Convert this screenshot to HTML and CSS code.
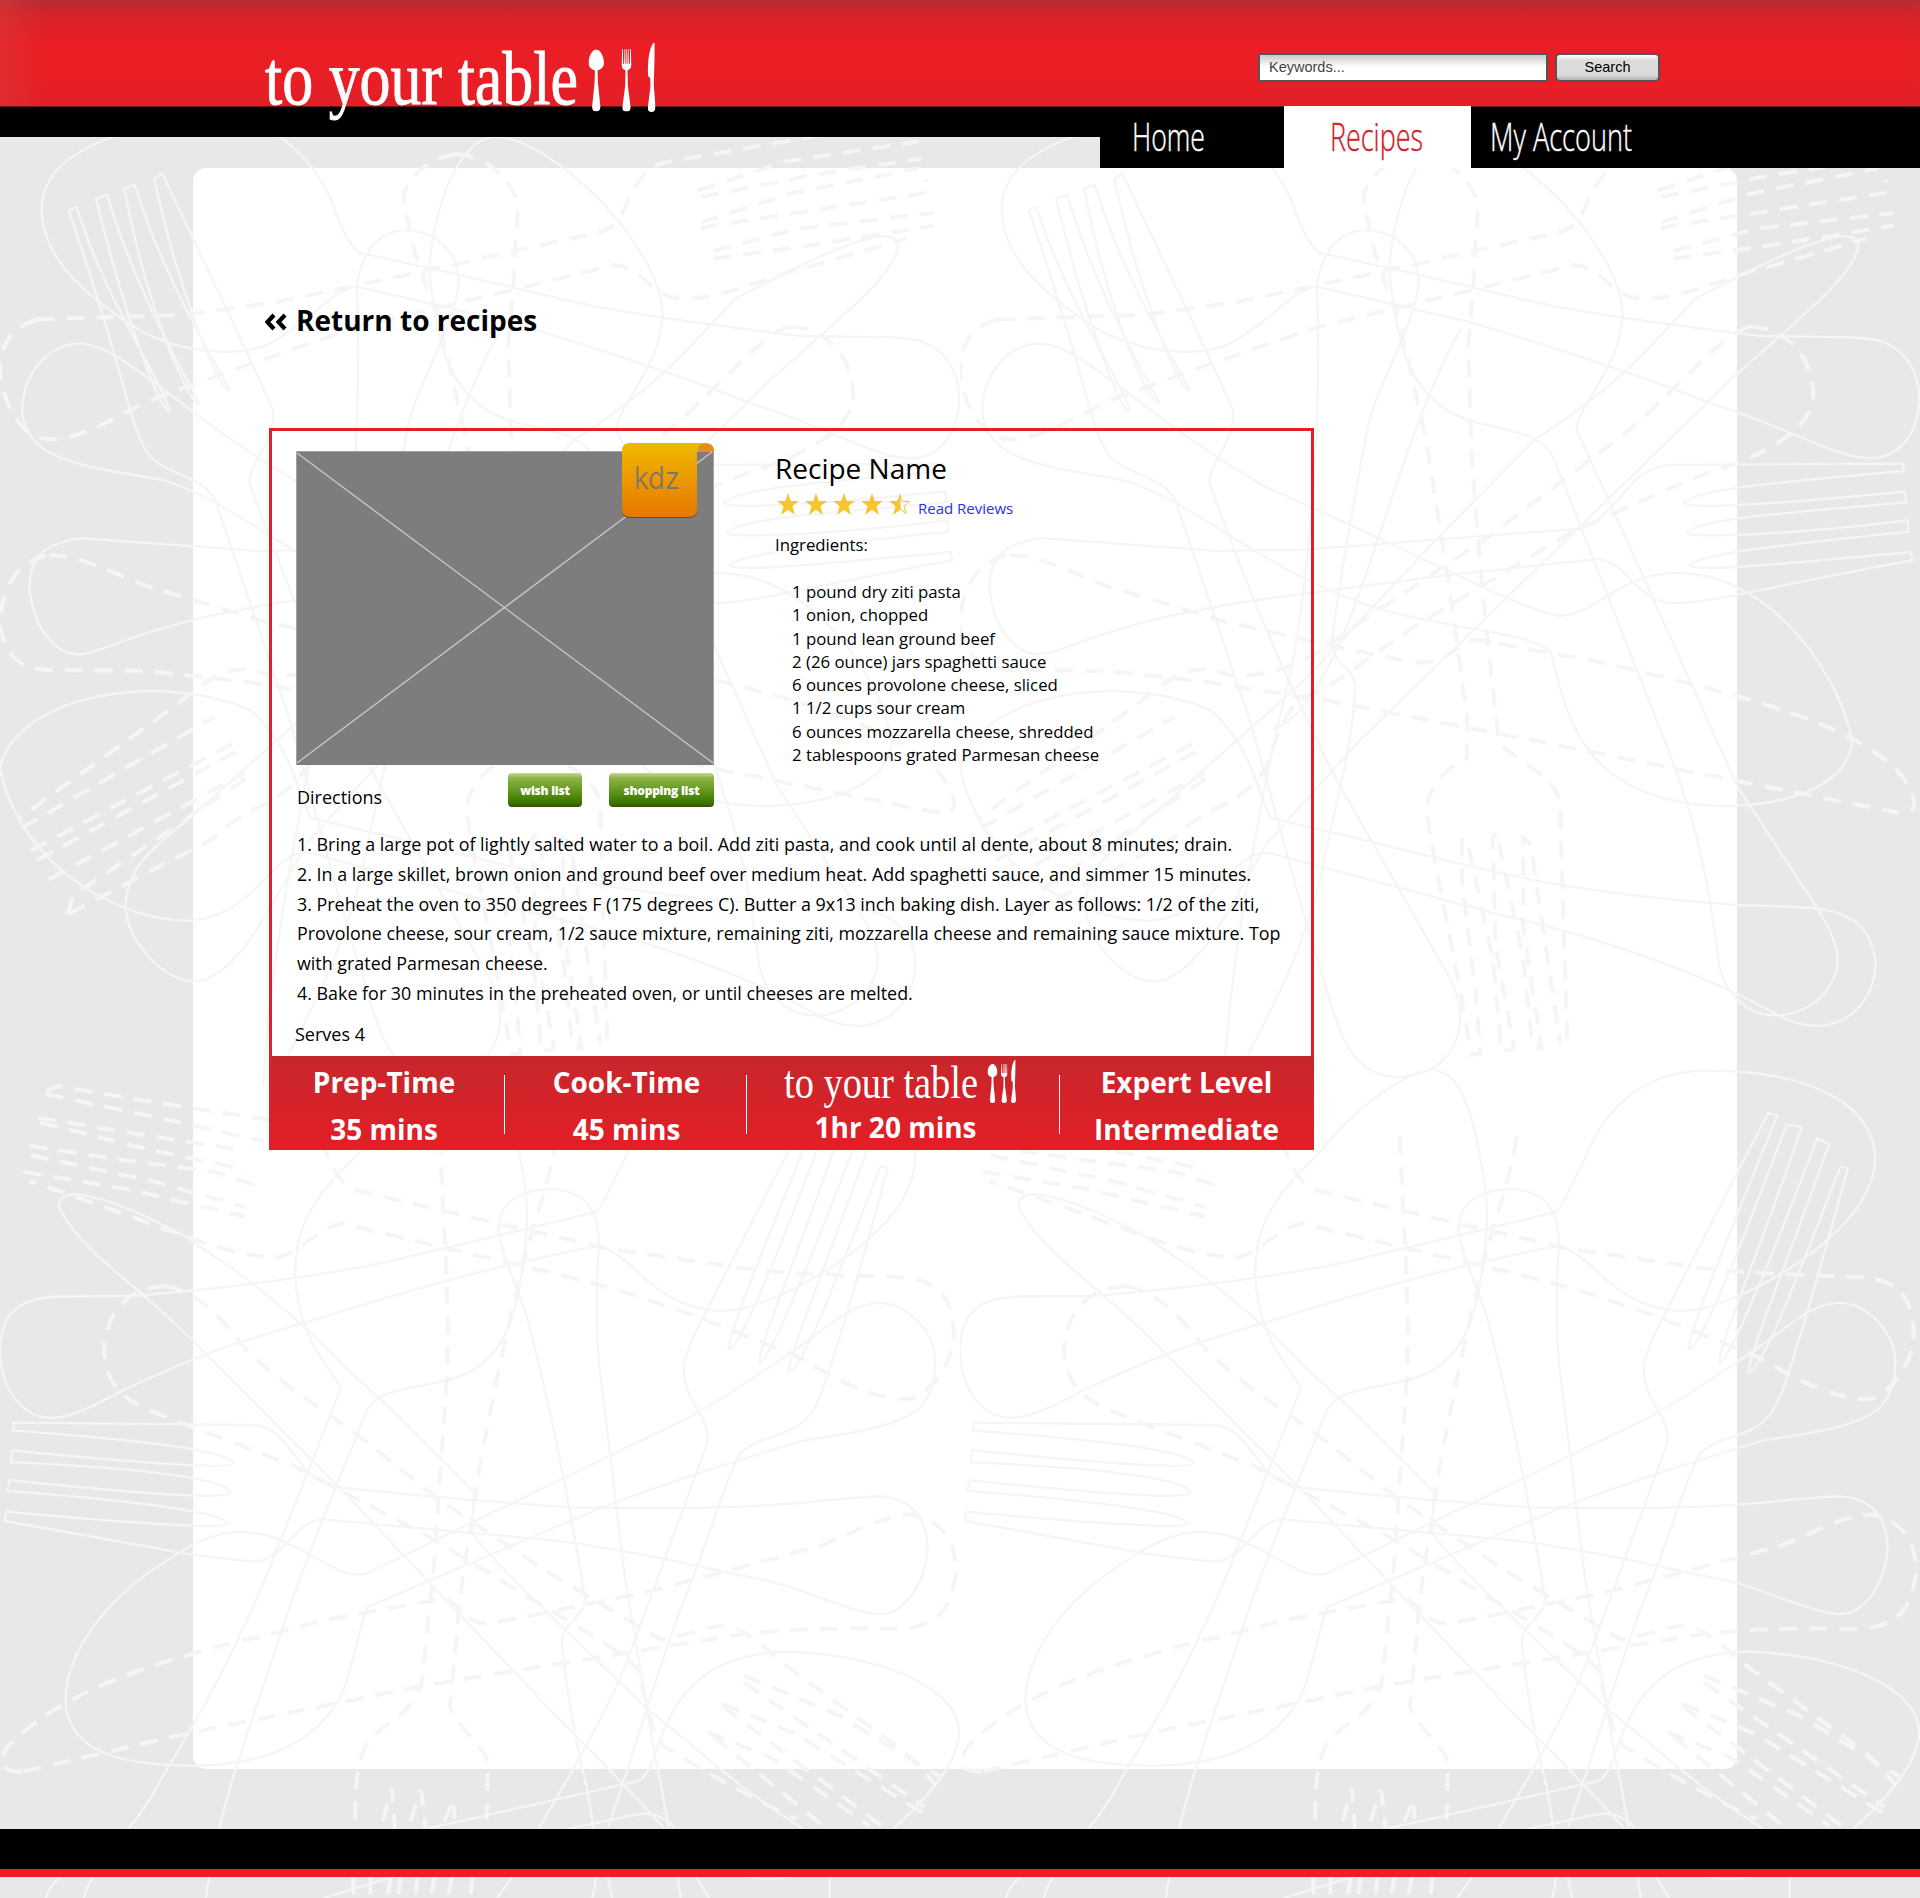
FILE: index.html
```html
<!DOCTYPE html>
<html lang="en">
<head>
<meta charset="utf-8">
<title>to your table - Recipe</title>
<link rel="stylesheet" href="styles.css">
</head>
<body>
<svg class="defs" width="0" height="0" aria-hidden="true">
  <symbol id="spoon" viewBox="0 0 46 187" preserveAspectRatio="none"><path d="M23 0C10 0 0 23 0 40C0 52 8 60 19 63L18 100L11 170C10 182 14 187 23 187S36 182 35 170L28 100L27 63C38 60 46 52 46 40C46 23 36 0 23 0Z"/></symbol>
  <symbol id="fork" viewBox="0 0 30 187" preserveAspectRatio="none"><path d="M2 0H4L5 44H8L9 0H11L12 44H14V0H16V44H18L19 0H21L22 44H25L26 0H28L30 48C29 57 25 61 18 64L19 110L27 172C28 183 24 187 15 187S2 183 3 172L11 110L12 64C5 61 1 57 0 48Z"/></symbol>
  <symbol id="knife" viewBox="0 0 24 207" preserveAspectRatio="none"><path d="M17 0H21C22 50 19 105 19 130L24 190C24 203 20 207 12 207S0 203 1 193L9 130L8 105L2 100C-1 70 3 20 17 0Z"/></symbol>
  <symbol id="star" viewBox="0 0 22 22"><path d="M11 0L13.800 8H22L15.400 13.200L18 22L11 16.800L4 22L6.600 13.200L0 8H8.200Z"/></symbol>
</svg>

<svg class="doodles" width="1920" height="1898" aria-hidden="true">
  <defs>
    <pattern id="cutlery" width="960" height="1898" patternUnits="userSpaceOnUse">
      <g transform="translate(0 130) scale(.61224 .63776)">
        <g class="line">
          <path d="M450 5C500 40 530 80 545 120S575 190 592 194C700 215 850 250 940 270S1250 317 1310 323C1400 325 1460 322 1500 330C1550 345 1567 385 1567 425C1565 470 1540 512 1490 515C1430 515 1350 465 1230 430C1100 380 950 335 836 302L585 246C540 250 520 290 450 330C400 360 300 350 230 315C120 250 68 190 68 122C70 70 110 35 200 5"/>
          <path d="M112 125L125 121C170 260 250 370 278 440C265 455 200 280 157 108L175 101C220 250 300 380 325 428C310 435 240 280 203 92L220 86C270 240 350 360 375 408C360 415 290 250 252 76L265 68C320 180 430 400 446 440C450 490 405 520 408 555C440 640 500 800 610 1010L800 1330C840 1400 810 1485 710 1485C620 1475 620 1400 570 1260L475 930L355 590C340 540 270 545 240 505C210 460 210 400 112 125"/>
          <path d="M805 10C740 20 700 150 702 230C715 350 740 430 840 458C920 475 950 480 970 515L1160 980C1220 1130 1230 1240 1240 1310C1260 1390 1340 1410 1400 1365C1450 1320 1440 1280 1400 1220L1270 1030L1130 730L1007 470C1010 430 1080 370 1082 290C1080 180 900 10 805 10"/>
          <path d="M790 630L940 485C1060 410 1110 360 1200 265C1300 215 1460 135 1467 180C1465 230 1350 310 1250 400L650 960L500 1120C450 1200 390 1335 315 1335C260 1330 210 1270 205 1220C205 1150 260 1120 320 1070L560 865L790 630"/>
          <path d="M512 1080C490 1070 490 980 410 910C270 850 30 880 0 1000C30 1150 190 1240 310 1240C430 1230 440 1120 512 1135L880 1230C1070 1270 1250 1340 1330 1385C1430 1440 1500 1370 1495 1300C1480 1210 1400 1220 1270 1215C900 1190 800 1140 512 1080"/>
          <path d="M132 640C60 650 48 680 48 720C55 780 90 825 132 822C190 815 220 775 500 735L780 700L1040 673C1090 675 1100 735 1160 742C1230 742 1300 720 1555 675L1553 662C1400 675 1200 695 1192 683C1200 665 1350 650 1549 630L1548 612C1350 635 1200 640 1187 632C1200 610 1350 600 1546 584L1543 567C1350 585 1190 595 1182 585C1200 565 1300 555 1541 535L1540 523L1160 525C1090 530 1080 600 1015 625L560 658L420 660Z"/>
          <path d="M130 335C80 335 38 380 36 440C40 530 180 530 270 550C400 590 500 700 700 755C850 790 940 790 965 820C990 900 1000 1050 1240 1060C1370 1060 1450 1020 1457 960C1440 860 1330 700 1180 695C1080 690 1040 760 980 762C920 755 740 660 500 560C300 450 200 335 130 335"/>
          <path d="M430 1500C440 1300 500 1000 540 850C580 650 590 400 583 245C590 190 620 157 665 157C720 160 755 200 748 250C740 310 680 400 665 470C630 650 615 740 608 800C605 840 650 840 645 880C640 980 610 1060 590 1170C560 1280 530 1340 460 1470"/>
          <path d="M820 310C700 500 640 900 510 940"/>
        </g>
        <g class="dash">
          <path d="M745 38C690 45 650 90 660 120L680 200L720 310L760 480L800 720L828 920L828 985C790 1000 760 1040 762 1070C770 1130 800 1250 835 1450L850 1448L842 1350L820 1180V1110L832 1130L870 1300L885 1445L905 1440L875 1280L870 1110L876 1100L920 1300L935 1435L950 1440L920 1250V1110L932 1120L980 1430"/>
          <path d="M745 38C800 40 850 90 845 130L838 250L830 340L836 520L855 740L880 960C920 1000 975 1010 980 1060L992 1430"/>
          <path d="M60 297C20 310 0 330 0 385C10 440 40 490 90 485C150 480 200 440 270 415L400 370L580 310L840 250L1000 212C1050 210 1060 265 1120 265C1200 260 1250 230 1320 215L1480 170"/>
          <path d="M60 297L300 290L450 270L700 220L980 160C1030 150 1020 75 1080 52L1330 10L1440 2"/>
          <path d="M1140 95L1280 50L1500 18M1145 105L1330 70L1505 45M1145 145L1290 100L1500 60M1145 153L1300 130L1515 98L1512 78M1165 190L1300 155L1525 130M1165 202L1330 180L1525 150"/>
          <path d="M1290 308C1360 310 1400 370 1393 430C1370 490 1280 520 1200 545L1000 630L860 710L740 780L590 880C530 890 520 950 500 1000C460 1060 400 1060 350 1110L110 1230"/>
          <path d="M1290 308C1240 320 1150 430 1080 480L860 640L640 780C580 830 510 860 440 855C380 830 340 860 290 900L30 1080"/>
          <path d="M35 1095L350 920M50 1130L380 962M60 1145L385 975M80 1175L400 1008M110 1230L120 1200L405 1015"/>
          <path d="M75 667C20 680 0 730 0 780C15 840 40 848 110 847L240 848L400 865L600 895L900 950L1240 1015L1540 1072C1580 1070 1550 1010 1500 980C1400 910 1200 870 1050 835L850 800C820 795 800 840 740 835L590 805L430 770L240 715C150 680 120 665 75 667Z"/>
        </g>
      </g>
      <g transform="translate(0 1160) scale(.61224 .47066)">
        <g class="line">
          <path d="M78 548C30 540 0 480 0 400C2 340 20 290 100 290L215 289C350 275 500 250 620 220L970 112C985 105 990 70 1020 0C1060 -140 1140 -190 1220 -190C1400 -190 1495 -110 1495 0C1490 130 1350 250 1250 300C1180 340 1120 320 1060 260C1020 210 1000 190 978 182C850 215 730 250 500 345C380 390 330 410 200 490C130 540 100 550 78 548"/>
          <path d="M1085 1420C1050 1370 1000 1300 900 1170L550 690L300 365C200 240 140 200 100 110C90 90 100 75 120 72C180 80 240 120 300 160C360 215 380 230 400 250C500 350 540 410 580 460L640 530L775 705L770 790C800 850 950 1030 1060 1170C1150 1260 1200 1330 1310 1420"/>
          <path d="M970 1420C965 1390 960 1330 950 1290C940 1230 925 1120 918 1030C915 980 960 970 955 930C930 720 900 530 860 330C850 290 820 200 815 160C810 110 830 65 900 62C960 65 975 110 978 170C975 280 970 380 985 500L1020 880L1055 1150C1065 1250 1080 1320 1092 1420"/>
          <path d="M210 1420C230 1390 250 1350 270 1300C340 1150 380 1050 430 900L557 485C540 440 485 380 482 240C482 160 500 90 580 -5C650 -120 740 -200 780 -190C820 -180 840 -80 850 0C865 80 862 150 855 220C840 350 820 440 730 468C650 490 620 490 600 530C560 660 500 840 460 1000C420 1160 380 1300 358 1420"/>
          <path d="M22 558L410 563C470 565 480 650 520 680C535 695 560 697 600 702C750 722 850 730 930 738C1100 742 1250 740 1350 722C1400 718 1420 714 1440 715C1490 720 1515 760 1515 830C1510 900 1480 965 1435 965C1370 955 1300 900 1220 885C1080 845 950 810 850 802L525 763C480 770 460 855 415 853C340 845 300 835 290 833L8 767L10 747C200 770 370 785 372 773C370 755 280 730 12 703L16 680C200 705 370 725 377 706C370 680 250 655 18 642L20 617C200 640 380 660 382 643C360 615 230 595 22 575Z"/>
          <path d="M600 950L980 740C1100 680 1200 640 1310 597C1380 580 1450 575 1500 530C1530 490 1530 440 1525 400C1510 340 1470 300 1430 304C1380 310 1340 370 1280 420C1220 470 1180 510 1120 550L600 878C560 895 520 840 470 815C400 770 340 790 280 845C170 930 107 1050 107 1150C110 1240 170 1288 320 1287C430 1285 520 1240 560 1130C580 1060 585 1000 600 950"/>
          <path d="M880 1420C930 1310 980 1200 1020 1080L1150 620C1160 590 1160 570 1130 510C1110 450 1110 430 1150 330L1320 -100L1335 -95C1240 210 1190 370 1190 400C1200 420 1260 240 1350 -75L1375 -70C1290 250 1240 390 1240 430C1255 430 1310 260 1400 -45L1420 -35C1350 220 1290 410 1288 450C1310 450 1370 240 1438 14L1450 18C1420 160 1370 400 1340 500C1310 600 1260 570 1210 620C1190 660 1160 800 1110 960C1070 1100 1030 1280 993 1420"/>
          <path d="M700 1420L1040 1320C1070 1310 1070 1220 1110 1150C1150 1070 1230 1040 1300 1045C1440 1055 1567 1120 1567 1220C1560 1300 1500 1370 1460 1420M930 1420L1050 1388C1080 1390 1090 1405 1103 1420"/>
          <path d="M75 1568Q80 1545 100 1520M137 1568Q142 1540 155 1520M336 1568L342 1520M528 1568L645 1522M812 1568L838 1520M968 1568L974 1520M1000 1568L992 1520M1112 1568L1106 1520M1158 1568L1136 1520M1215 1520Q1258 1535 1300 1520M1355 1568V1520"/>
        </g>
        <g class="dash">
          <path d="M525 -40C550 40 560 60 600 70L830 140L1000 190C1150 215 1200 235 1350 243C1450 250 1490 243 1520 265C1560 290 1565 380 1550 420C1530 480 1500 510 1475 508C1400 500 1350 450 1290 410C1150 340 1050 280 850 225L560 135C520 140 490 200 450 208C350 200 250 130 48 45"/>
          <path d="M718 -50C725 150 735 300 730 450C725 600 715 700 712 820L690 1100C680 1190 600 1200 590 1270C580 1310 580 1360 580 1405"/>
          <path d="M910 -50C890 90 860 170 850 250C820 400 790 600 780 680C770 780 755 880 750 950L735 1160C740 1200 790 1240 797 1280L795 1400"/>
          <path d="M270 268C200 270 170 340 170 410C175 480 200 510 260 540L480 650L700 800L980 1020C1010 1050 1050 1070 1045 1110C1060 1150 1060 1230 1090 1250C1150 1300 1250 1370 1300 1400"/>
          <path d="M270 268C330 280 370 350 400 400C460 480 540 540 600 600L720 725L900 880L1080 1020L1170 990C1220 990 1240 1030 1290 1080L1480 1260L1530 1330"/>
          <path d="M35 1300C0 1300 0 1280 10 1250C60 1180 150 1110 300 1055C400 1015 450 1010 520 980L730 930C760 960 770 990 800 985L1050 920C1200 870 1280 840 1340 820C1400 790 1440 755 1490 753C1550 770 1565 830 1560 890C1550 960 1530 990 1470 996C1350 995 1290 995 1200 1010L700 1115L300 1220Z"/>
          <path d="M1215 1095L1370 1180L1535 1310M1215 1110L1510 1375M1180 1155L1300 1220L1510 1390M1180 1160L1440 1415M1155 1215L1260 1270L1420 1415M1165 1225L1345 1415"/>
          <path d="M625 1405L640 1335L645 1420M670 1405L688 1340L695 1420M725 1405L742 1360V1400M577 1522V1568M605 1522V1568M638 1522L633 1568M655 1522L650 1568M682 1522L678 1568M710 1522L703 1568M738 1522L732 1568M772 1522L768 1568"/>
          <path d="M75 -145L95 -157L240 -125L440 -85M75 -140L240 -95L430 -40M62 -90L200 -60L400 -20M65 -80L250 -20L400 20M48 -30L200 0L350 25L420 55M38 25L200 60L400 120M50 -10L250 45L400 100"/>
        </g>
      </g>
    </pattern>
  </defs>
  <rect width="1920" height="1898" fill="url(#cutlery)"/>
</svg>

<header class="header">
  <div class="banner">
    <a class="logo" href="#">
      <svg width="400" height="82" viewBox="0 0 400 82">
        <text x="0" y="64" font-size="76" textLength="313" lengthAdjust="spacingAndGlyphs">to your table</text>
        <use href="#spoon" x="323.500" y="9.500" width="15.500" height="62"/>
        <use href="#fork" x="356.500" y="9" width="10" height="62.500"/>
        <use href="#knife" x="382.500" y="3" width="8" height="69"/>
      </svg>
    </a>
    <form class="search">
      <input class="search-field" type="text" placeholder="Keywords...">
      <button class="search-button" type="button">Search</button>
    </form>
  </div>
  <div class="nav-row">
    <nav class="nav">
      <a class="tab home" href="#"><svg width="76" height="61"><text x="0" y="44" textLength="73" lengthAdjust="spacingAndGlyphs">Home</text></svg></a>
      <a class="tab current" href="#"><svg width="96" height="61"><text x="0" y="44" textLength="93" lengthAdjust="spacingAndGlyphs">Recipes</text></svg></a>
      <a class="tab account" href="#"><svg width="146" height="61"><text x="-1" y="44" textLength="142" lengthAdjust="spacingAndGlyphs">My Account</text></svg></a>
    </nav>
  </div>
</header>

<main class="panel">
  <div class="content">
    <a class="return" href="#">
      <svg class="chevrons" width="22" height="18" viewBox="0 0 22 18"><path d="M9 2L2.500 9L9 16M20 2L13.500 9L20 16"/></svg>
      <span>Return to recipes</span>
    </a>
    <article class="card">
      <div class="top">
        <div class="media">
          <div class="photo">
            <svg width="418" height="314"><path d="M0 0.500H418M0.500 0V314M417.500 0V314" stroke="#a3a3a3"/><path d="M1 2L417 312M1 312L416 1" stroke="#c9c9c9" stroke-width="1.300"/></svg>
            <svg class="badge" width="93" height="76" viewBox="0 0 93 76">
              <defs><linearGradient id="amber" x2="0" y2="1"><stop stop-color="#f0b800"/><stop offset="1" stop-color="#e67800"/></linearGradient></defs>
              <path d="M0 9V67Q0 75 8 75H67Q75 75 75 67V9Z" fill="#6b4a22"/>
              <path d="M75 8H92Q92 0 83 0Q76 0 75 8Z" fill="#e88a20"/>
              <path d="M8 0H84Q75 1 75 9V66Q75 74 67 74H8Q0 74 0 66V8Q0 0 8 0Z" fill="url(#amber)"/>
              <text x="12" y="46" textLength="46" lengthAdjust="spacingAndGlyphs">kdz</text>
            </svg>
          </div>
          <div class="actions">
            <h2 class="directions-title">Directions</h2>
            <button class="green wish" type="button">wish list</button>
            <button class="green shopping" type="button">shopping list</button>
          </div>
        </div>
        <div class="details">
          <h1 class="name">Recipe Name</h1>
          <div class="rating">
            <svg width="136" height="24" fill="#f9c52d">
              <use href="#star" x="0" width="22" height="22"/><use href="#star" x="28" width="22" height="22"/><use href="#star" x="56" width="22" height="22"/><use href="#star" x="84" width="22" height="22"/>
              <path d="M123.500 0V16.500L116 22L118.600 13.200L112 8H120.200Z"/>
              <path d="M123 2L125.500 8.500H132.500L127 13L129.200 20.500L123 16" fill="none" stroke="#f9c52d"/>
            </svg>
            <a class="reviews" href="#">Read Reviews</a>
          </div>
          <h2 class="ingredients-title">Ingredients:</h2>
          <ul class="ingredients">
            <li>1 pound dry ziti pasta</li>
            <li>1 onion, chopped</li>
            <li>1 pound lean ground beef</li>
            <li>2 (26 ounce) jars spaghetti sauce</li>
            <li>6 ounces provolone cheese, sliced</li>
            <li>1 1/2 cups sour cream</li>
            <li>6 ounces mozzarella cheese, shredded</li>
            <li>2 tablespoons grated Parmesan cheese</li>
          </ul>
        </div>
      </div>
      <div class="steps">
        <p>1. Bring a large pot of lightly salted water to a boil. Add ziti pasta, and cook until al dente, about 8 minutes; drain.</p>
        <p>2. In a large skillet, brown onion and ground beef over medium heat. Add spaghetti sauce, and simmer 15 minutes.</p>
        <p>3. Preheat the oven to 350 degrees F (175 degrees C). Butter a 9x13 inch baking dish. Layer as follows: 1/2 of the ziti,<br>Provolone cheese, sour cream, 1/2 sauce mixture, remaining ziti, mozzarella cheese and remaining sauce mixture. Top<br>with grated Parmesan cheese.</p>
        <p>4. Bake for 30 minutes in the preheated oven, or until cheeses are melted.</p>
      </div>
      <p class="serves">Serves 4</p>
      <div class="stats">
        <div class="stat prep"><span>Prep-Time</span><span>35 mins</span></div>
        <div class="stat cook"><span>Cook-Time</span><span>45 mins</span></div>
        <div class="stat total">
          <svg width="234" height="50">
            <text x="1" y="41.500" font-size="46" textLength="194" lengthAdjust="spacingAndGlyphs">to your table</text>
            <use href="#spoon" x="204.500" y="8" width="10" height="39"/>
            <use href="#fork" x="218" y="8" width="6.500" height="39"/>
            <use href="#knife" x="228" y="4" width="5" height="43"/>
          </svg>
          <span>1hr 20 mins</span>
        </div>
        <div class="stat level"><span>Expert Level</span><span>Intermediate</span></div>
      </div>
    </article>
  </div>
</main>
<footer class="footer"></footer>
</body>
</html>
```
FILE: styles.css
```css
* { box-sizing: border-box; }
body {
  margin: 0;
  width: 1920px;
  height: 1898px;
  position: relative;
  overflow: hidden;
  background: #e8e8e8;
  color: #000;
  font-family: "Open Sans", sans-serif;
}
a { text-decoration: none; color: inherit; }
h1, h2, p, ul { margin: 0; padding: 0; font-weight: 400; }
ul { list-style: none; }
.defs { position: absolute; }

/* line-art backdrop, drawn above the white panel and below its content */
.doodles { position: absolute; left: 0; top: 0; }
.line path, .dash path { fill: none; stroke: #f5f5f5; vector-effect: non-scaling-stroke; }
.line path { stroke-width: 2.3; }
.dash path { stroke-width: 4; stroke-dasharray: 18 12; }

.header, .content, .footer { position: relative; z-index: 1; }
.header { height: 168px; }
.banner {
  height: 107px;
  display: flex;
  justify-content: space-between;
  padding: 40px 260px 0 265px;
  border-bottom: 1px solid #6e1014;
  background:
    linear-gradient(90deg, rgba(215,60,60,.5), rgba(234,30,37,0) 45px, rgba(234,30,37,0) 1910px, rgba(200,50,50,.2)),
    linear-gradient(#b52c31 0, #d4232a 14px, #ea1e25 42px, #ea1e25 80px, #e02028 100%);
}
.logo { display: block; position: relative; z-index: 1; height: 82px; }
.logo svg, .total svg { display: block; overflow: visible; fill: #fff; font-family: "Liberation Serif", serif; }
.logo text { stroke: #fff; stroke-width: 0.9; }
.search { display: flex; gap: 7px; margin-top: 13px; }
.search-field, .search-button { height: 29px; border: 2px solid #555; font: 14.500px "Liberation Sans", sans-serif; }
.search-field {
  width: 290px;
  padding: 0 9px 2px;
  background: linear-gradient(#c9c9c9, #fff 12px);
}
.search-field::placeholder { color: #444; opacity: 1; }
.search-button { width: 105px; padding: 0 0 2px; border-radius: 5px; background: linear-gradient(#fff, #ddd 5px, #dadada 20px, #b5b5b5); color: #000; }
.nav-row { display: flex; height: 61px; }
.nav-row::before { content: ""; width: 1100px; height: 30px; background: #000; }
.nav { flex: 1; display: flex; background: #000; }
.tab { display: block; color: #fff; }
.tab svg { display: block; overflow: visible; fill: currentColor; font-size: 38px; font-weight: 300; }
.tab text { stroke: currentColor; stroke-width: 0.4; }
.home { width: 184px; padding-left: 32px; }
.current { width: 187px; height: 62px; margin-top: -1px; padding: 1px 0 0 46px; background: #fff; color: #d2232a; }
.account { padding-left: 20px; }

.panel { width: 1544px; height: 1601px; margin-left: 193px; padding: 133px 0 0 72px; border-radius: 13px; background: #fff; }
.return { display: flex; align-items: center; gap: 9px; font-size: 28px; line-height: 38px; font-weight: 700; }
.chevrons { margin-top: 4px; fill: none; stroke: #000; stroke-width: 4.200; }

.card { width: 1045px; height: 722px; margin: 89px 0 0 4px; border: 3px solid #e41e26; display: flex; flex-direction: column; padding-top: 20px; }
.top { display: flex; gap: 61px; padding-left: 24px; height: 356px; }
.photo { position: relative; width: 418px; height: 314px; background: #7d7d7d; }
.photo svg { display: block; }
.badge { position: absolute; left: 326px; top: -8px; font: 300 31px "Inter", sans-serif; }
.badge text { fill: #7d7468; }
.actions { display: flex; margin-top: 8px; }
.directions-title { flex: 1; padding: 7px 0 0 1px; font-size: 18px; line-height: 34px; }
.green {
  height: 34px;
  padding: 0;
  border: 0;
  border-radius: 4px;
  background: linear-gradient(#c3d89a 0, #8fb548 5px, #417f00 27px, #3b7400 30px, #3a4d00);
  color: #fff;
  font: 800 12px "Open Sans", sans-serif;
  letter-spacing: -0.25px;
}
.wish { width: 74px; margin-right: 27px; }
.shopping { width: 105px; }
.name { margin-top: -1px; font-size: 28px; line-height: 36px; }
.rating { display: flex; height: 35px; gap: 5px; padding: 7px 0 0 2px; }
.reviews { margin-top: 5px; font-size: 15px; line-height: 20px; color: #2d2df0; }
.ingredients-title { margin-top: 12px; font-size: 16.770px; line-height: 24px; }
.ingredients { margin-top: 23px; padding-left: 17px; font-size: 16.770px; line-height: 23.300px; white-space: nowrap; }
.steps { margin: 23px 0 0 25px; font-size: 17.890px; line-height: 29.800px; white-space: nowrap; }
.serves { margin: 13px 0 0 23px; font-size: 18px; line-height: 24px; }

.stats { display: flex; height: 94px; margin: auto -3px -3px 0; padding-right: 3px; background: linear-gradient(#c6272c, #e41e26); color: #fff; font-size: 28px; font-weight: 700; line-height: 47px; text-align: center; }
.stat { position: relative; display: flex; flex-direction: column; white-space: nowrap; padding-top: 3px; }
.stat + .stat::before { content: ""; position: absolute; left: 0; top: 19px; width: 1px; height: 59px; background: #fff; }
.prep { width: 232px; padding-right: 8px; }
.cook { width: 242px; padding-left: 3px; }
.total { width: 313px; padding: 0; }
.total svg { margin-left: 37px; font-weight: 400; }
.total span { line-height: 43px; padding-right: 14px; }
.level { flex: 1; padding-left: 3px; }
.footer { height: 48px; margin-top: 60px; background: #000; border-bottom: 8px solid #f01c24; }
```
